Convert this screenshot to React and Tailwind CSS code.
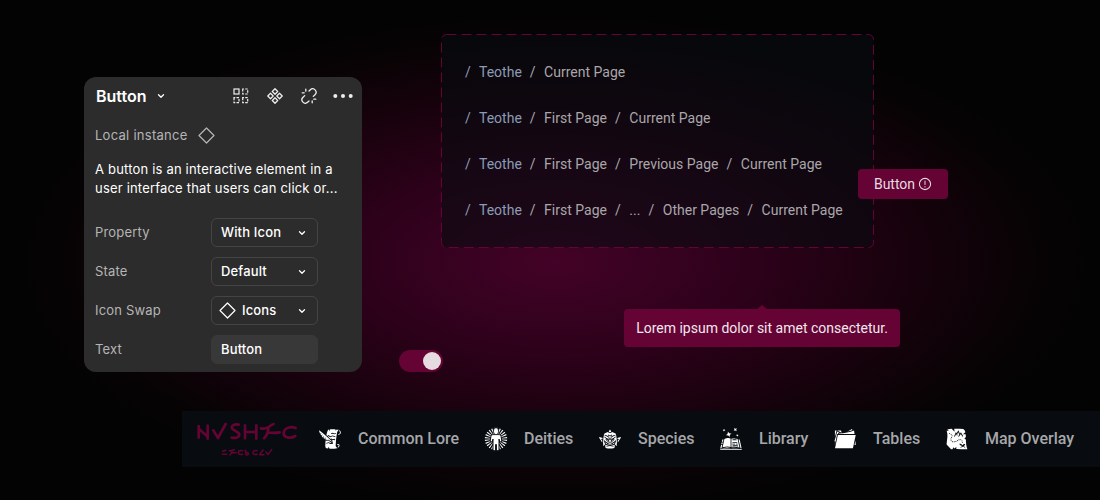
import { GiScrollQuill, GiOrcHead, GiSpellBook, GiFullFolder, GiTreasureMap } from "react-icons/gi";

function Chevron() {
  return (
    <svg className="h-2 w-2 shrink-0" viewBox="0 0 8 8" fill="none" stroke="currentColor" strokeWidth="1.3" strokeLinecap="round" strokeLinejoin="round">
      <path d="M1.5 2.8 4 5.2 6.5 2.8" />
    </svg>
  );
}

function Diamond() {
  return (
    <svg className="h-[17px] w-[17px] shrink-0" viewBox="0 0 17 17" fill="none" stroke="currentColor" strokeWidth="1.2" strokeLinejoin="round">
      <path d="M8.5 1 16 8.5 8.5 16 1 8.5Z" />
    </svg>
  );
}

function GridIcon() {
  return (
    <svg className="h-4 w-4" viewBox="0 0 16 16" fill="none" stroke="currentColor" strokeWidth="1.2">
      <rect x="1" y="1" width="5" height="5" />
      <g strokeDasharray="2.5 1.25" strokeDashoffset="1.25">
        <rect x="9.7" y="1" width="5" height="5" />
        <rect x="1" y="9.7" width="5" height="5" />
        <rect x="9.7" y="9.7" width="5" height="5" />
      </g>
    </svg>
  );
}

function ComponentIcon() {
  return (
    <svg className="h-4 w-4" viewBox="0 0 16 16" fill="none" stroke="currentColor" strokeWidth="1.3" strokeLinejoin="round">
      <path d="M8 .8 10.7 3.5 8 6.2 5.3 3.5ZM8 9.8 10.7 12.5 8 15.2 5.3 12.5ZM3.5 5.3 6.2 8 3.5 10.7 .8 8ZM12.5 5.3 15.2 8 12.5 10.7 9.8 8Z" />
    </svg>
  );
}

function DetachIcon() {
  return (
    <svg className="h-4 w-4" viewBox="0 0 16 16" fill="none" stroke="currentColor" strokeWidth="1.3" strokeLinecap="round">
      <path d="M8 3 9.4 1.700a3.400 3.400 0 0 1 4.800 4.800L12.300 8.400" />
      <path d="M8 13 6.600 14.300A3.400 3.400 0 0 1 1.800 9.500L3.700 7.600" />
      <path d="M4.800 3.200V1.200M3.200 4.800H1.200M11.200 12.800v2M12.800 11.200h2" />
    </svg>
  );
}

function MoreIcon() {
  return (
    <svg className="h-4 w-5" viewBox="0 0 20 16" fill="currentColor">
      <circle cx="2.3" cy="8" r="2" />
      <circle cx="10" cy="8" r="2" />
      <circle cx="17.7" cy="8" r="2" />
    </svg>
  );
}

const rays = Array.from({ length: 24 }, (_, i) => ((i + 0.5) * 360) / 24);

function DeityIcon({ className }) {
  return (
    <svg className={className} viewBox="0 0 24 24" fill="currentColor">
      {rays.map((a) => (
        <path key={a} d="M11.8 7.500 11.350 .8h1.300L12.200 7.500Z" transform={`rotate(${a} 12 12)`} />
      ))}
      <path className="stroke-[#080c11]" strokeWidth="1" d="M9.200 7.600h5.600c1.400 0 2.100.8 2.300 2l.8 4.900-2 .6-.9-3v11.600h-2.600v-6.200h-.8v6.200H9V12.100l-.9 3-2-.6.8-4.900c.2-1.200.9-2 2.300-2Z" />
      <ellipse className="stroke-[#080c11]" strokeWidth=".8" cx="12" cy="4.200" rx="2.600" ry="3.500" />
    </svg>
  );
}

function Logo() {
  return (
    <svg className="h-[50px] w-[120px] shrink-0" viewBox="0 0 360 150" fill="none" stroke="#640334" strokeLinecap="round" strokeLinejoin="round">
      <g strokeWidth="8">
        <path d="M26 36v35M28 46l25 22M53 35v39" />
        <path d="M70 49 84 72l23-42" />
        <path d="M146 32c-14-3-25 4-19 12 5 7 21 9 21 18 0 8-12 11-23 9" />
        <path d="M165 34v39M165 54h32M199 34v40" />
        <path d="M213 43c8 2 15 0 21-3 6-4 11-8 17-10M235 41c0 12-5 24-13 32M232 56c12 0 24 2 37-1" />
        <path d="M317 42c-16-6-35 0-36 15-1 14 20 18 35 9" />
      </g>
      <g strokeWidth="4.500">
        <path d="M98 112l9-3M97 121h13" />
        <path d="M118 110c7 2 9-2 15-3M127 109c0 6-3 10-7 14M125 116h13" />
        <path d="M158 110c-8-2-13 1-13 6s6 7 13 5M166 109l2 6 4 1c5 1 4 7-1 7-4 0-5-3-3-6" />
        <path d="M201 110c-8-2-12 1-12 6s6 7 12 5M219 108l-10 14h13M228 114l6 8 11-15" />
      </g>
    </svg>
  );
}

function InfoIcon() {
  return (
    <svg className="h-3.5 w-3.5" viewBox="0 0 14 14" fill="none" stroke="currentColor">
      <circle cx="7" cy="7" r="5.600" strokeWidth="1.100" />
      <path d="M7 3.700v4.200M7 9.200v1.200" strokeWidth="1" />
    </svg>
  );
}

const properties = [
  { label: "Property", value: "With Icon" },
  { label: "State", value: "Default" },
  { label: "Icon Swap", value: "Icons", icon: true },
  { label: "Text", value: "Button", input: true },
];

const trails = [
  ["Teothe", "Current Page"],
  ["Teothe", "First Page", "Current Page"],
  ["Teothe", "First Page", "Previous Page", "Current Page"],
  ["Teothe", "First Page", "...", "Other Pages", "Current Page"],
];

const links = [
  { label: "Common Lore", Icon: GiScrollQuill, width: "w-[102px]" },
  { label: "Deities", Icon: DeityIcon, width: "w-[50px]" },
  { label: "Species", Icon: GiOrcHead, width: "w-[57px]" },
  { label: "Library", Icon: GiSpellBook, width: "w-[50px]" },
  { label: "Tables", Icon: GiFullFolder, width: "w-12" },
  { label: "Map Overlay", Icon: GiTreasureMap, width: "w-[90px]" },
];

function InstancePanel() {
  return (
    <aside className="mt-[77px] ml-[84px] h-[295px] w-[278px] shrink-0 rounded-xl bg-[#2c2c2c] pl-[11px] font-['Inter',sans-serif] text-[13px] text-[#b5b5b5]">
      <header className="flex h-[39px] items-center pr-[9px] pb-px pl-px text-white">
        <h2 className="w-[61px] text-base font-semibold">Button</h2>
        <Chevron />
        <div className="ml-auto flex items-center gap-[18px] text-[#eeeeee]">
          <GridIcon />
          <ComponentIcon />
          <DetachIcon />
          <div className="-ml-0.5"><MoreIcon /></div>
        </div>
      </header>
      <div className="flex h-[39px] items-center gap-[10px] tracking-[0.27px]">
        Local instance <Diamond />
      </div>
      <p className="mt-[5px] h-[58px] leading-[19px] tracking-[0.19px] text-white">
        A button is an interactive element in a<br />
        user interface that users can click or...
      </p>
      <div className="flex flex-col gap-[10px]">
        {properties.map(({ label, value, icon, input }) => (
          <div key={label} className="flex h-[29px] items-center">
            <span className="w-[116px] tracking-[0.18px]">{label}</span>
            <div className={`flex h-[29px] w-[107px] items-center rounded-md border font-medium tracking-[0.15px] text-white ${input ? "border-[#383838] bg-[#383838]" : "border-[#444444]"} ${icon ? "gap-[6px] pl-[7px]" : "pl-[9px]"}`}>
              {icon && <Diamond />}
              <span>{value}</span>
              {!input && <div className="mr-[11px] ml-auto"><Chevron /></div>}
            </div>
          </div>
        ))}
      </div>
    </aside>
  );
}

function Breadcrumbs() {
  return (
    <div className="relative flex h-[214px] w-[433px] flex-col">
      <svg className="absolute inset-0 h-full w-full" fill="none">
        <rect x=".5" y=".5" width="432" height="213" rx="5" className="fill-[#080c11]/60 stroke-[#640334]" strokeDasharray="10 5" />
      </svg>
      <div className="relative flex flex-col gap-[26px] pt-7 pl-6 text-sm leading-5 text-[#aaa6aa]">
        {trails.map((trail) => (
          <nav key={trail.join()} className="flex">
            {trail.map((page, i) => (
              <span key={page} className={i === 0 ? "flex text-[#8c9bb5]" : "flex tracking-[0.01px]"}>
                <span className={i === 0 ? "w-[14px]" : "w-[22.3px] pl-2"}>/</span>
                {page}
              </span>
            ))}
          </nav>
        ))}
      </div>
      <button className="absolute top-[135px] left-[417px] flex h-[30px] w-[90px] items-center justify-center gap-[3px] rounded bg-[#640334] text-sm text-[#e6dbe1]">
        Button <InfoIcon />
      </button>
    </div>
  );
}

export default function App() {
  return (
    <main className="flex h-[500px] w-[1100px] flex-col overflow-hidden bg-[#030303] bg-[radial-gradient(ellipse_550px_255px_at_555px_262px,#430227_0%,#2d011a_36%,#15020b_68%,#070304_88%,#030303_100%)] font-['Roboto',sans-serif]">
      <section className="flex h-[411px] shrink-0">
        <InstancePanel />
        <div className="mt-[350px] ml-[37px] flex h-[22px] w-11 shrink-0 items-center justify-end rounded-full bg-[#640334] pr-0.5">
          <span className="h-[18px] w-[18px] rounded-full bg-[#e6dbe1]" />
        </div>
        <div className="-ml-0.5 pt-[34px]">
          <Breadcrumbs />
          <div className="relative mt-[61px] ml-[183px] flex h-[38px] w-[276px] items-center justify-center rounded bg-[#640334] text-sm text-[#f3e8ee]">
            <span className="absolute -top-1 left-[133px] border-x-[5px] border-b-[4px] border-x-transparent border-b-[#640334]" />
            Lorem ipsum dolor sit amet consectetur.
          </div>
        </div>
      </section>
      <nav className="ml-[182px] flex h-14 shrink-0 items-center bg-[#080c11] pl-2 text-base font-medium text-[#a6a7a9]">
        <Logo />
        <div className="ml-2 flex gap-[24px]">
          {links.map(({ label, Icon, width }) => (
            <a key={label} className="flex items-center gap-4 whitespace-nowrap">
              <Icon className="h-6 w-6 shrink-0 text-white" />
              <span className={width}>{label}</span>
            </a>
          ))}
        </div>
      </nav>
    </main>
  );
}
